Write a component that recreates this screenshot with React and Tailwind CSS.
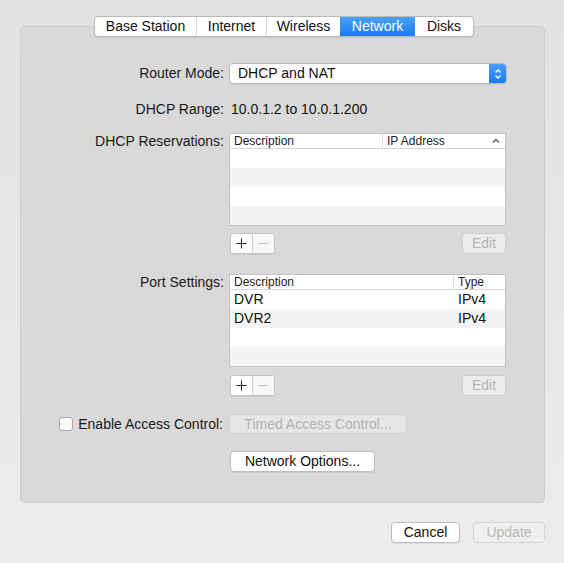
import React, { useState } from "react";

const tabs = [
  { name: "Base Station", w: "w-[101px]" },
  { name: "Internet", w: "w-[70px]" },
  { name: "Wireless", w: "w-[74px]" },
  { name: "Network", w: "w-[75px]" },
  { name: "Disks", w: "w-[58px]" },
];

const Label = ({ children, top }) => (
  <div
    className={`w-[208px] shrink-0 pr-[5px] text-right text-[14px] text-[#1a1a1a] ${
      top ? "leading-[17px]" : "flex items-center justify-end"
    }`}
  >
    {children}
  </div>
);

const PlusMinus = () => (
  <div className="flex h-[21px] w-[45px] rounded-[3px] border border-[#c4c4c4] bg-white overflow-hidden shadow-[0_1px_0_rgba(0,0,0,0.05)]">
    <div className="flex w-[22px] items-center justify-center border-r border-[#d4d4d4]">
      <svg width="11" height="11" viewBox="0 0 11 11">
        <path d="M5.5 0.5v10M0.5 5.5h10" stroke="#222" strokeWidth="1" />
      </svg>
    </div>
    <div className="flex w-[22px] items-center justify-center bg-[#f7f7f7]">
      <svg width="11" height="11" viewBox="0 0 11 11">
        <path d="M0.5 5.5h10" stroke="#c2c2c2" strokeWidth="1" />
      </svg>
    </div>
  </div>
);

const EditButton = () => (
  <div className="flex h-[21px] w-[44px] items-center justify-center rounded-[4px] border border-[#d0d0d0] bg-[#ececec] text-[14px] text-[#b4b4b4]">
    Edit
  </div>
);

const Table = ({ cols, rows }) => (
  <div className="w-[277px] border border-[#c2c2c2] bg-white">
    <div className="flex h-[15px] items-center border-b border-[#d6d6d6] text-[12px] text-[#222]">
      {cols.map((c, i) => (
        <div
          key={c.name}
          className={`flex h-full items-center ${c.w} ${
            i > 0 ? "border-l border-[#dcdcdc] pl-[4px]" : "pl-[4px]"
          }`}
        >
          <span className="flex-1">{c.name}</span>
          {c.caret && (
            <svg width="8" height="6" viewBox="0 0 8 6" className="mr-[5px]">
              <path d="M1 4.5L4 1.5L7 4.5" stroke="#444" strokeWidth="1.1" fill="none" />
            </svg>
          )}
        </div>
      ))}
    </div>
    {[0, 1, 2, 3].map((i) => (
      <div
        key={i}
        className={`flex h-[19px] items-center text-[14px] text-[#111] ${
          i % 2 ? "bg-[#f4f4f4]" : "bg-white"
        }`}
      >
        {rows[i] &&
          rows[i].map((cell, j) => (
            <div key={j} className={`${cols[j].w} ${j > 0 ? "pl-[5px]" : "pl-[4px]"}`}>
              {cell}
            </div>
          ))}
      </div>
    ))}
  </div>
);

export default function App() {
  const [active] = useState("Network");
  const [access, setAccess] = useState(false);

  return (
    <div
      className="flex h-[563px] w-[564px] flex-col bg-gradient-to-b from-[#e2e2e4] to-[#ececee] pt-[16px]"
      style={{ fontFamily: '"Liberation Sans", Helvetica, Arial, sans-serif' }}
    >
      <div className="relative z-10 -mb-[11px] flex justify-center pl-[4px]">
        <div className="flex h-[21px] rounded-[4px] border border-[#b9b9b9] bg-white overflow-hidden shadow-[0_1px_1px_rgba(0,0,0,0.08)]">
          {tabs.map((t, i) => (
            <div
              key={t.name}
              className={`flex items-center justify-center text-[14px] ${t.w} ${
                i > 0 && tabs[i - 1].name !== active && t.name !== active
                  ? "border-l border-[#d6d6d6]"
                  : ""
              } ${
                t.name === active
                  ? "bg-gradient-to-b from-[#4aa0fd] to-[#177bf6] text-white"
                  : "text-[#111]"
              }`}
            >
              {t.name}
            </div>
          ))}
        </div>
      </div>

      <div className="ml-[20px] h-[477px] w-[525px] rounded-[5px] border border-[#cbcbcb] bg-[#d9d9d9] pt-[36px]">
        <div className="flex h-[21px]">
          <Label>Router Mode:</Label>
          <div className="flex h-[21px] w-[278px] rounded-[4px] border border-[#bdbdbd] bg-white overflow-hidden shadow-[0_1px_0_rgba(0,0,0,0.06)]">
            <div className="flex flex-1 items-center pl-[8px] text-[14px] text-[#111]">DHCP and NAT</div>
            <div className="flex w-[17px] items-center justify-center bg-gradient-to-b from-[#4aa0fd] to-[#177bf6]">
              <svg width="8" height="12" viewBox="0 0 8 12">
                <path d="M1.5 4.5L4 2L6.5 4.5M1.5 7.5L4 10L6.5 7.5" stroke="#fff" strokeWidth="1.3" fill="none" />
              </svg>
            </div>
          </div>
        </div>

        <div className="mt-[16px] flex h-[18px]">
          <Label>DHCP Range:</Label>
          <div className="flex items-center pl-[2px] text-[14px] text-[#111]">10.0.1.2 to 10.0.1.200</div>
        </div>

        <div className="mt-[15px] flex">
          <Label top>DHCP Reservations:</Label>
          <Table
            cols={[
              { name: "Description", w: "w-[152px]" },
              { name: "IP Address", w: "w-[123px]", caret: true },
            ]}
            rows={[]}
          />
        </div>

        <div className="mt-[7px] flex">
          <div className="w-[209px] shrink-0" />
          <div className="flex w-[276px] items-center justify-between">
            <PlusMinus />
            <EditButton />
          </div>
        </div>

        <div className="mt-[20px] flex">
          <Label top>Port Settings:</Label>
          <Table
            cols={[
              { name: "Description", w: "w-[223px]" },
              { name: "Type", w: "w-[50px]" },
            ]}
            rows={[
              ["DVR", "IPv4"],
              ["DVR2", "IPv4"],
            ]}
          />
        </div>

        <div className="mt-[8px] flex">
          <div className="w-[209px] shrink-0" />
          <div className="flex w-[276px] items-center justify-between">
            <PlusMinus />
            <EditButton />
          </div>
        </div>

        <div className="mt-[18px] flex h-[20px]">
          <div className="flex w-[208px] shrink-0 items-center justify-end pr-[6px] text-[14px] text-[#1a1a1a]">
            <button
              onClick={() => setAccess(!access)}
              className="mr-[5px] h-[14px] w-[14px] rounded-[3px] border border-[#a9a9a9] bg-white"
            />
            Enable Access Control:
          </div>
          <div className="flex h-[20px] w-[178px] items-center justify-center rounded-[4px] border border-[#cfcfcf] bg-[#e6e6e6] text-[14px] text-[#b2b2b2]">
            Timed Access Control...
          </div>
        </div>

        <div className="mt-[17px] flex h-[21px]">
          <div className="w-[209px] shrink-0" />
          <div className="flex h-[21px] w-[145px] items-center justify-center rounded-[4px] border border-[#bdbdbd] bg-white text-[14px] text-[#111] shadow-[0_1px_0_rgba(0,0,0,0.06)]">
            Network Options...
          </div>
        </div>
      </div>

      <div className="mt-[19px] flex justify-end gap-[13px] pr-[19px]">
        <div className="flex h-[21px] w-[69px] items-center justify-center rounded-[4px] border border-[#bdbdbd] bg-white text-[14px] text-[#111] shadow-[0_1px_0_rgba(0,0,0,0.06)]">
          Cancel
        </div>
        <div className="flex h-[21px] w-[72px] items-center justify-center rounded-[4px] border border-[#d4d4d4] bg-[#efeff0] text-[14px] text-[#b8b8b8]">
          Update
        </div>
      </div>
    </div>
  );
}
